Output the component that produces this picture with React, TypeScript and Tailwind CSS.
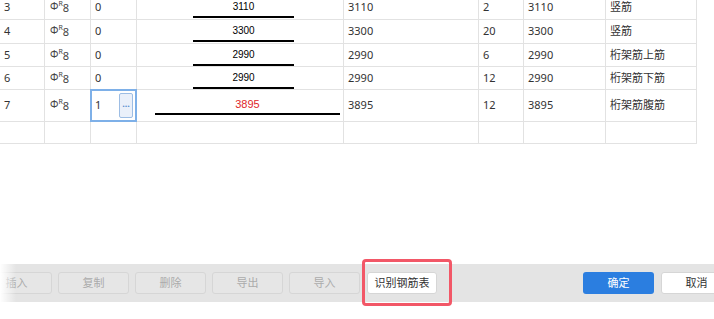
import React from "react";

type Row = {
  no: string;
  qty: string;
  shape: string;
  len: string;
  count: string;
  total: string;
  note: string;
  h: string;
  active?: boolean;
};

const rows: Row[] = [
  { no: "3", qty: "0", shape: "3110", len: "3110", count: "2", total: "3110", note: "竖筋", h: "h-[24px]" },
  { no: "4", qty: "0", shape: "3300", len: "3300", count: "20", total: "3300", note: "竖筋", h: "h-[24px]" },
  { no: "5", qty: "0", shape: "2990", len: "2990", count: "6", total: "2990", note: "桁架筋上筋", h: "h-[23px]" },
  { no: "6", qty: "0", shape: "2990", len: "2990", count: "12", total: "2990", note: "桁架筋下筋", h: "h-[23px]" },
  { no: "7", qty: "1", shape: "3895", len: "3895", count: "12", total: "3895", note: "桁架筋腹筋", h: "h-[32px]", active: true },
];

const cell = "border-r border-b border-[#e2e2e2] flex items-center pl-[4px] text-[#333]";

function Grade() {
  return (
    <span className="flex items-start pl-[1px] -mt-[3px] text-[#444]">
      <span className="text-[10px] leading-none mt-[2px]">Φ</span>
      <span className="text-[7px] leading-none mt-[1px]">R</span>
      <span className="text-[11px] leading-none mt-[3px]">8</span>
    </span>
  );
}

function ShapeCell({ r }: { r: Row }) {
  const wide = r.active;
  return (
    <div className={`border-r border-b border-[#e2e2e2] flex items-start ${r.h} ${wide ? "pt-[9px]" : "pt-[6px]"}`}>
      <div className={`flex flex-col items-center ${wide ? "ml-[18px] w-[185px]" : "ml-[56px] w-[101px]"}`}>
        <span
          className={`font-['Liberation_Sans',sans-serif] leading-none ${wide ? "text-[11px] text-[#e0262b]" : "text-[10px] text-black"}`}
        >
          {r.shape}
        </span>
        <div className={`w-full h-[2px] bg-black ${wide ? "mt-[3px]" : "mt-[4px]"}`} />
      </div>
    </div>
  );
}

function ToolButton({ label }: { label: string }) {
  return (
    <div className="w-[71px] h-[22px] shrink-0 rounded-[3px] border border-[#d6d6d6] bg-[#e6e6e6] flex items-center justify-center text-[11px] text-[#ababab]">
      {label}
    </div>
  );
}

export default function App() {
  return (
    <div className="w-[714px] h-[319px] bg-white overflow-hidden flex flex-col font-['Noto_Sans','Noto_Sans_CJK_SC',sans-serif] text-[11px]">
      {/* table, scrolled so row 3 sits at the top */}
      <div className="-mt-[4px] grid grid-cols-[45px_46px_46px_207px_135px_45px_82px_91px] w-[697px] shrink-0">
        {rows.map((r) => (
          <React.Fragment key={r.no}>
            <div className={`${cell} ${r.h}`}>{r.no}</div>
            <div className={`${cell} ${r.h}`}>
              <Grade />
            </div>
            <div className={`${cell} ${r.h} relative`}>
              {r.qty}
              {r.active && (
                <div className="absolute -left-[1px] -top-[1px] w-[47px] h-[33px] border-2 border-[#7eb0e8]">
                  <div className="absolute right-[2px] top-[2px] w-[14px] h-[25px] rounded-[2px] border border-[#9dbde4] bg-[#eaf0fa] flex items-center justify-center text-[9px] font-bold text-[#5a8fd0] leading-none">
                    ···
                  </div>
                </div>
              )}
            </div>
            <ShapeCell r={r} />
            <div className={`${cell} ${r.h}`}>{r.len}</div>
            <div className={`${cell} ${r.h}`}>{r.count}</div>
            <div className={`${cell} ${r.h}`}>{r.total}</div>
            <div className={`${cell} ${r.h}`}>{r.note}</div>
          </React.Fragment>
        ))}
        {[0, 1, 2, 3, 4, 5, 6, 7].map((i) => (
          <div key={i} className={`${cell} h-[22px]`} />
        ))}
      </div>

      <div className="flex-1" />

      {/* bottom toolbar */}
      <div className="relative h-[38px] bg-[#e4e4e4] flex items-center mb-[17px] shrink-0">
        <div className="absolute left-0 top-0 h-full w-[16px] bg-gradient-to-r from-white to-transparent" />
        <div className="flex items-center gap-[6px] -ml-[19px] shrink-0">
          <ToolButton label="插入" />
          <ToolButton label="复制" />
          <ToolButton label="删除" />
          <ToolButton label="导出" />
          <ToolButton label="导入" />
        </div>
        <div className="relative ml-[7px] shrink-0">
          <div className="w-[70px] h-[22px] rounded-[3px] border border-[#d6d6d6] bg-white flex items-center justify-center text-[11px] text-[#333]">
            识别钢筋表
          </div>
          <div className="absolute -left-[5px] -top-[13px] w-[90px] h-[47px] rounded-[4px] border-[3px] border-[#f25767]" />
        </div>
        <div className="ml-[146px] w-[71px] h-[22px] shrink-0 rounded-[3px] bg-[#2b7ee0] flex items-center justify-center text-[11px] text-white">
          确定
        </div>
        <div className="ml-[7px] w-[71px] h-[22px] shrink-0 rounded-[3px] border border-[#d6d6d6] bg-white flex items-center justify-center text-[11px] text-[#333]">
          取消
        </div>
      </div>
    </div>
  );
}
